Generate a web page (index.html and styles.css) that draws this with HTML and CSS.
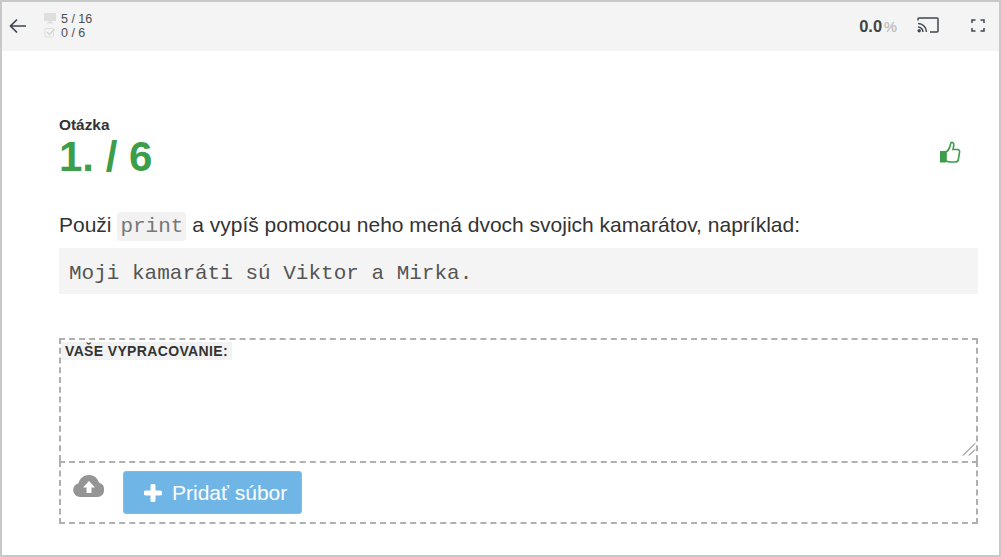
FILE: index.html
```html
<!DOCTYPE html>
<html lang="sk">
<head>
  <meta charset="UTF-8" />
  <meta name="viewport" content="width=device-width, initial-scale=1.0"/>
  <title>Otázka 1 / 6</title>
  <link rel="stylesheet" href="styles.css">
</head>
<body>
  <div class="frame">
    <header class="topbar">
      <a class="back" href="#">
        <svg width="20" height="20" viewBox="0 0 20 20"><path d="M18 10H2.500M9 3.500L2.500 10L9 16.500" fill="none" stroke="#3f4650" stroke-width="1.700"/></svg>
      </a>
      <div class="counts">
        <div class="count-row">
          <svg width="12" height="11" viewBox="0 0 12 11"><path d="M0 0h12v8H7.500v1.500H9V10.500H3V9.500h1.500V8H0z" fill="#dedede"/></svg>
          <span>5 / 16</span>
        </div>
        <div class="count-row">
          <svg width="12" height="11" viewBox="0 0 12 11"><rect x="1" y="1.500" width="8.500" height="8.500" rx="1" fill="none" stroke="#dedede"/><path d="M3 5l2.500 2.500L10.500 2" fill="none" stroke="#d4d4d4" stroke-width="1.400"/></svg>
          <span>0 / 6</span>
        </div>
      </div>
      <div class="score"><b>0.0</b> <span>%</span></div>
      <a class="cast" href="#">
        <svg width="22" height="16" viewBox="0 0 22 16"><path d="M1 3.500V2a1 1 0 0 1 1-1h18a1 1 0 0 1 1 1v12a1 1 0 0 1-1 1h-7" fill="none" stroke="#3f4650" stroke-width="1.500"/><path d="M1 6.500a8.500 8.500 0 0 1 8.500 8.500M1 10a5 5 0 0 1 5 5" fill="none" stroke="#3f4650" stroke-width="1.500"/><circle cx="2.200" cy="13.800" r="1.700" fill="#3f4650"/></svg>
      </a>
      <a class="full" href="#">
        <svg width="14" height="13" viewBox="0 0 14 13"><path d="M1 4V1h3.500M9.500 1H13v3M13 9v3H9.500M4.500 12H1V9" fill="none" stroke="#3f4650" stroke-width="1.500"/></svg>
      </a>
    </header>

    <main class="content">
      <div class="question-head">
        <div>
          <div class="q-label">Otázka</div>
          <div class="q-number">1. / 6</div>
        </div>
        <svg class="thumb" width="22" height="23" viewBox="0 0 22 23">
          <rect x="1" y="10" width="6" height="11.500" fill="#3c9d4a"/>
          <path d="M7 11c2-1 3.500-3.500 4-6C11.400 2.500 12 1 13.500 1.500c1.500.5 1.500 2.500 1 4.500L14 8.500h4.500c1.800 0 2.300 1.500 2 3l-1.200 7c-.3 1.600-1.300 2.500-3 2.500H11c-1.500 0-2.500-.7-4-1z" fill="none" stroke="#3c9d4a" stroke-width="1.600"/>
        </svg>
      </div>

      <p class="task">Použi <code>print</code> a vypíš pomocou neho mená dvoch svojich kamarátov, napríklad:</p>
      <pre class="sample">Moji kamaráti sú Viktor a Mirka.</pre>

      <form class="answer">
        <div class="answer-box">
          <label class="answer-label" for="answer">VAŠE VYPRACOVANIE:</label>
          <textarea id="answer"></textarea>
          <svg class="grip" width="14" height="14" viewBox="0 0 14 14"><path d="M1 13.500L13 1.500M7 13.500L13 7.500" fill="none" stroke="#666" stroke-width="1"/></svg>
        </div>
        <div class="upload-box">
          <svg class="cloud" width="34" height="24" viewBox="0 0 34 24">
            <path d="M8 23a7 7 0 0 1-1.500-13.800C8 4 12 1 17 1c5 0 8.500 3 10 7.500A7.500 7.500 0 0 1 26 23z" fill="#959595"/>
            <path d="M17 7l6 6.500h-3.500V19h-5v-5.500H11z" fill="#fff"/>
          </svg>
          <button type="button" class="add-file">
            <svg class="plus" width="18" height="18" viewBox="0 0 18 18"><path d="M9 2v14M2 9h14" fill="none" stroke="#fff" stroke-width="5" stroke-linecap="round"/></svg>
            Pridať súbor
          </button>
        </div>
      </form>
    </main>
  </div>
</body>
</html>
```

FILE: styles.css
```css
html, body { margin: 0; padding: 0; height: 100%; }
body { font-family: "Liberation Sans", Arial, sans-serif; color: #333; background: #fff; }
.frame { box-sizing: border-box; height: 557px; border: 2px solid #c8c8c8; overflow: hidden; }

.topbar { display: flex; align-items: center; height: 49px; background: #f4f4f4; color: #3f4650; }
.topbar a { display: flex; color: inherit; }
.back { margin-left: 6px; margin-top: -2px; }
.counts { margin-left: 16px; margin-top: -2px; font-size: 12.5px; line-height: 14px; color: #4a4f57; }
.count-row { display: flex; align-items: center; gap: 5px; }
.score { margin-left: auto; font-size: 16.5px; color: #444; }
.score b { font-weight: bold; }
.score span { color: #c4c4c4; font-weight: bold; font-size: 15px; margin-left: -3px; }
.cast { margin-left: 20px; margin-top: -4px; }
.full { margin-left: 32px; margin-right: 14px; margin-top: -2px; }

.content { padding: 66px 21px 0 57px; }
.question-head { display: flex; justify-content: space-between; align-items: center; }
.q-label { font-size: 15.4px; font-weight: bold; line-height: 16px; color: #333; }
.q-number { font-size: 42px; font-weight: bold; line-height: 48px; color: #3c9d4a; }
.thumb { margin-right: 17px; margin-top: 6px; }

.task { margin: 29px 0 0; font-size: 21px; line-height: 30px; color: #333; }
.task code { font-family: "Liberation Mono", monospace; font-size: 21px; color: #777; background: #f2f2f2; border-radius: 3px; padding: 3px; }
.sample { margin: 6px 0 0; height: 46px; box-sizing: border-box; padding: 15px 10px 0; background: #f4f4f4; font-family: "Liberation Mono", monospace; font-size: 21px; line-height: 22px; color: #555; }

.answer { margin-top: 44px; }
.answer-box { border: 2px dashed #b0b0b0; border-bottom: 0; height: 123px; box-sizing: border-box; position: relative; display: flex; }
.answer-label { position: absolute; left: 0; top: 2px; padding: 1px 4px; background: #f2f2f2; font-size: 14px; font-weight: bold; letter-spacing: .35px; line-height: 16px; color: #333; }
.answer-box textarea { flex: 1; border: 0; padding: 0; margin: 0; background: transparent; outline: none; resize: none; }
.grip { position: absolute; right: 0; bottom: 5px; pointer-events: none; }
.upload-box { display: flex; align-items: flex-start; gap: 17px; height: 63px; box-sizing: border-box; border: 2px dashed #b0b0b0; padding: 8px 0 0 11px; }
.cloud { margin-top: 3px; }
.add-file { display: flex; align-items: center; height: 43px; padding: 0 14px 0 20px; background: #6fb6e6; border: 1px solid #7cbeea; border-radius: 3px; color: #fff; font-family: inherit; font-size: 21px; }
.plus { margin-right: 10px; }
```
